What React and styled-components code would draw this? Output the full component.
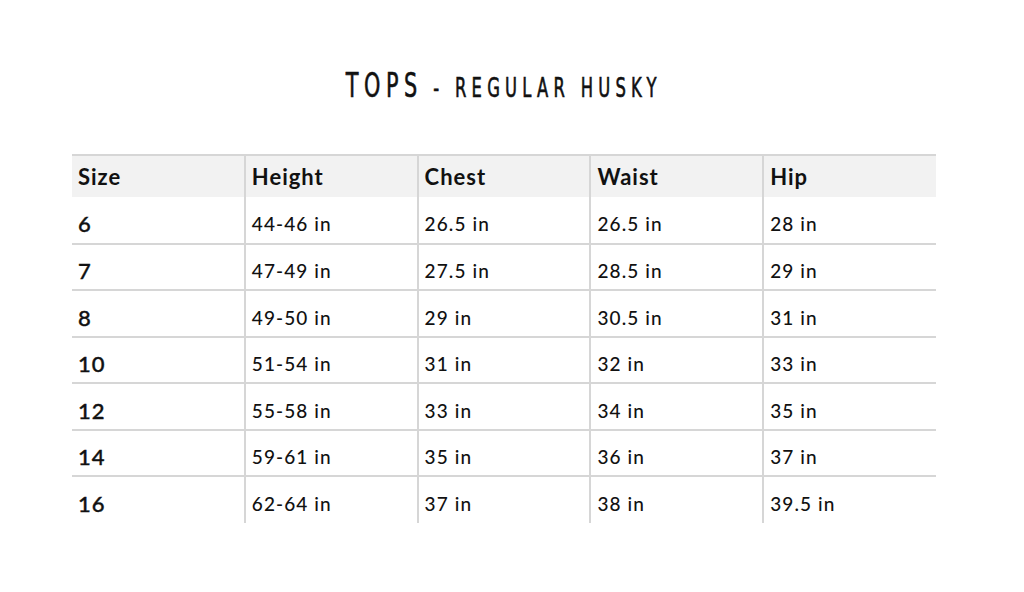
import React from "react";
import styled, { createGlobalStyle } from "styled-components";

const GlobalStyle = createGlobalStyle`
  body {
    margin: 0;
    background: #ffffff;
    font-family: "Lato", "DejaVu Sans", sans-serif;
    color: #111;
  }
`;

const rows = [
  ["6", "44-46 in", "26.5 in", "26.5 in", "28 in"],
  ["7", "47-49 in", "27.5 in", "28.5 in", "29 in"],
  ["8", "49-50 in", "29 in", "30.5 in", "31 in"],
  ["10", "51-54 in", "31 in", "32 in", "33 in"],
  ["12", "55-58 in", "33 in", "34 in", "35 in"],
  ["14", "59-61 in", "35 in", "36 in", "37 in"],
  ["16", "62-64 in", "37 in", "38 in", "39.5 in"],
];

const headers = ["Size", "Height", "Chest", "Waist", "Hip"];

const App = () => {
  return (
    <>
      <GlobalStyle />
      <Page>
        <TitleRow>
          <Title>
            <Big>TOPS</Big>
            <Small> - REGULAR HUSKY</Small>
          </Title>
        </TitleRow>
        <Chart>
          <thead>
            <tr>
              {headers.map((h, i) => (
                <Head key={h} first={i === 0}>
                  {h}
                </Head>
              ))}
            </tr>
          </thead>
          <tbody>
            {rows.map((r, ri) => (
              <Row key={r[0]} last={ri === rows.length - 1}>
                {r.map((c, i) => (
                  <Cell key={i} first={i === 0}>
                    {c}
                  </Cell>
                ))}
              </Row>
            ))}
          </tbody>
        </Chart>
      </Page>
    </>
  );
};

const Page = styled.div`
  width: 864px;
  padding: 66px 0 0 72px;
`;

const TitleRow = styled.div`
  display: flex;
  justify-content: center;
  height: 40px;
`;

const Title = styled.h1`
  margin: 0;
  white-space: nowrap;
  font-family: "DejaVu Sans Condensed", "DejaVu Sans", sans-serif;
  font-weight: 400;
  line-height: 40px;
  color: #111;
  -webkit-text-stroke: 0.6px #111;
  transform: scaleX(0.7);
  transform-origin: center;
`;

const Big = styled.span`
  font-size: 33px;
  letter-spacing: 8px;
`;

const Small = styled.span`
  font-size: 26px;
  letter-spacing: 7.5px;
`;

const Chart = styled.table`
  margin-top: 48px;
  width: 864px;
  border-collapse: collapse;
  table-layout: fixed;
  border-top: 2px solid #d6d6d6;
`;

const Head = styled.th`
  height: 42px;
  padding: 0 6px;
  box-sizing: border-box;
  background: #f2f2f2;
  text-align: left;
  font-size: 22px;
  font-weight: 700;
  letter-spacing: 1px;
  border-left: ${(p) => (p.first ? "none" : "2px solid #d6d6d6")};
`;

const Row = styled.tr`
  border-bottom: ${(p) => (p.last ? "none" : "2px solid #d6d6d6")};
`;

const Cell = styled.td`
  height: 46.5px;
  padding: 8px 6px 0;
  box-sizing: border-box;
  font-size: ${(p) => (p.first ? "22px" : "19px")};
  font-weight: 500;
  letter-spacing: 1.1px;
  vertical-align: middle;
  -webkit-text-stroke: ${(p) => (p.first ? "0.4px #111" : "0")};
  border-left: ${(p) => (p.first ? "none" : "2px solid #d6d6d6")};
`;

export default App;
